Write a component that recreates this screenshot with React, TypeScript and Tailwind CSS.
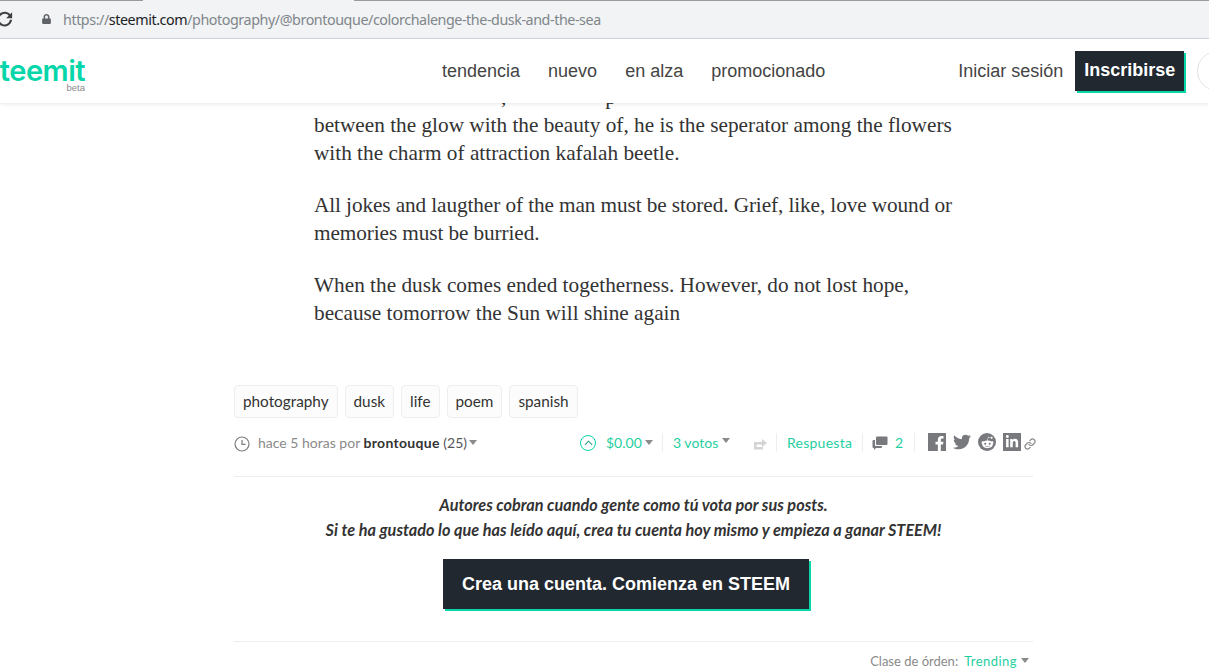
import React from "react";
import { FaFacebookF, FaTwitter, FaRedditAlien, FaLinkedinIn, FaLock } from "react-icons/fa";
import { Link as LinkIcon } from "lucide-react";

const Caret = ({ className = "" }: { className?: string }) => (
  <span className={`inline-block shrink-0 w-0 h-0 border-x-[4.5px] border-x-transparent border-t-[5px] border-t-[#8a8a8a] ${className}`} />
);
const Divider = ({ className = "" }: { className?: string }) => <span className={`w-px h-[19px] shrink-0 bg-[#eeeeee] ${className}`} />;

export default function App() {
  const sans = "font-['Lato','Noto_Sans',sans-serif]";
  return (
    <div className="w-[1209px] h-[670px] overflow-hidden bg-white flex flex-col font-['Liberation_Sans',sans-serif]">
      {/* browser chrome */}
      <div className="h-[39px] shrink-0 bg-[#f1f3f4] border-b border-[#d3d6e2] flex items-center relative">
        <div className="absolute top-0 left-0 w-[143px] h-px bg-[#9a9a9a]" />
        <div className="absolute top-0 left-[354px] right-0 h-px bg-[#9a9a9a]" />
        <svg viewBox="0 0 24 24" className="w-[18px] h-[18px] ml-[-4px] mt-[-1px] shrink-0 text-[#3c4043]" fill="none" stroke="currentColor" strokeWidth="2.8">
          <path d="M19 8a8.5 8.5 0 1 0 1 5" />
          <path d="M21.500 3v8h-8z" fill="currentColor" stroke="none" />
        </svg>
        <div className="ml-[10px] flex-1 h-[28px] flex items-center pl-[18px]">
          <FaLock className="w-[9px] h-[10px] text-[#5f6368]" />
          <span className="ml-[12px] mt-[1px] whitespace-nowrap text-[14.3px] text-[#80868b] font-['Noto_Sans',sans-serif] tracking-[-0.43px]">
            https://<span className="text-[#202124]">steemit.com</span>/photography/@brontouque/colorchalenge-the-dusk-and-the-sea
          </span>
        </div>
      </div>

      {/* header */}
      <div className="h-[64px] shrink-0 bg-white shadow-[0_1px_4px_rgba(0,0,0,0.1)] relative z-10 flex items-center whitespace-nowrap">
        <div className="w-[88px] shrink-0 flex flex-col items-end pr-[3px] mt-[6px]">
          <span className="text-[29px] leading-[28px] text-[#06d6a9] font-['Inter',sans-serif] font-semibold tracking-[-0.5px]">teemit</span>
          <span className="text-[9.500px] leading-[9px] text-[#8a8a8a] -mt-[2px]">beta</span>
        </div>
        <nav className="flex items-center gap-[28px] ml-[354px] text-[18px] text-[#444444]">
          <span>tendencia</span>
          <span>nuevo</span>
          <span>en alza</span>
          <span>promocionado</span>
        </nav>
        <span className="ml-[133px] text-[18px] text-[#444444]">Iniciar sesión</span>
        <span className="ml-[12px] w-[109px] h-[40px] shrink-0 flex items-center justify-center bg-[#22282f] text-white font-bold text-[18px] shadow-[2px_2px_0_#06d6a9] mt-[-1px]">Inscribirse</span>
        <span className="ml-[13px] w-[40px] h-[40px] shrink-0 rounded-full border border-[#e2e2e2] mt-[-1px]" />
      </div>

      {/* article */}
      <main className="flex-1 pl-[234px] w-[1060px]">
        <div className="pl-[80px] w-[730px] -mt-[20px] text-[21.280px] leading-[28px] text-[#333333] font-['Liberation_Serif',serif]">
          <div className="h-[28px] whitespace-nowrap">
            <span className="ml-[187px]">,</span>
            <span className="ml-[99px]">p</span>
          </div>
          <p className="w-[640px]">between the glow with the beauty of, he is the seperator among the flowers with the charm of attraction kafalah beetle.</p>
          <p className="mt-[24px] tracking-[-0.1px]">All jokes and laugther of the man must be stored. Grief, like, love wound or memories must be burried.</p>
          <p className="mt-[24px] w-[640px]">When the dusk comes ended togetherness. However, do not lost hope, because tomorrow the Sun will shine again</p>
        </div>

        <div className={`${sans} mt-[58px] flex gap-[7px] text-[15.300px] text-[#333333]`}>
          {["photography", "dusk", "life", "poem", "spanish"].map((t) => (
            <span key={t} className="h-[33px] px-[8px] flex items-center bg-[#fcfcfc] border border-[#eeeeee] rounded-[4px]">{t}</span>
          ))}
        </div>

        <div className={`${sans} mt-[7px] h-[34px] flex items-center text-[14px] text-[#8a8a8a] whitespace-nowrap`}>
          <div className="w-[346px] shrink-0 flex items-center">
            <svg viewBox="0 0 16 16" className="w-[16px] h-[16px] mt-[3px]" fill="none" stroke="#7d7d7d" strokeWidth="1.2">
              <circle cx="8" cy="8" r="7" />
              <path d="M8 4v4.300h3.500" />
            </svg>
            <span className="ml-[8px]">hace 5 horas por <b className="text-[#333333] tracking-[0.3px]">brontouque</b> <span className="text-[#555555]">(25)</span></span>
            <Caret className="ml-[2px]" />
          </div>

          <span className="w-[16px] h-[16px] shrink-0 mt-[2px] rounded-full border border-[#06d6a9] flex items-center justify-center">
            <svg viewBox="0 0 10 6" className="w-[9px] h-[6px]" fill="none" stroke="#2a9d82" strokeWidth="1.2"><path d="M1 5l4-4 4 4" /></svg>
          </span>
          <span className="ml-[10px] w-[34px] shrink-0 text-[#1fcf9f]">$0.00</span>
          <Caret className="ml-[5px]" />
          <Divider className="ml-[9px]" />
          <span className="ml-[10px] w-[45px] shrink-0 text-[#1fcf9f]">3 votos</span>
          <Caret className="ml-[4px] mb-[3px]" />
          <svg viewBox="0 0 14 12" className="w-[14px] h-[12px] ml-[24px] mt-[3px] shrink-0" fill="#d4d4d4">
            <path d="M0 4h8V1l5 4-5 4V6.500H2.500V9H9v2.500H0z" />
          </svg>
          <Divider className="ml-[8px]" />
          <span className="ml-[10px] w-[65px] shrink-0 text-center text-[#1fcf9f] tracking-[0.25px]">Respuesta</span>
          <Divider className="ml-[10px]" />
          <svg viewBox="0 0 16 14" className="w-[16px] h-[14px] ml-[9px] mt-[2px] shrink-0" fill="#77797d">
            <path d="M4 1.500a1 1 0 0 1 1-1h9.500a1 1 0 0 1 1 1V8a1 1 0 0 1-1 1H5a1 1 0 0 1-1-1z" />
            <path d="M0.500 5a1 1 0 0 1 1-1H3v5c0 .8.500 1 1 1h6v1a1 1 0 0 1-1 1H4l-2 2v-2H1.500a1 1 0 0 1-1-1z" />
          </svg>
          <span className="ml-[7px] w-[8px] shrink-0 text-[#1fcf9f]">2</span>
          <Divider className="ml-[11px]" />
          <span className="ml-[13px] w-[18px] h-[18px] shrink-0 bg-[#77797d] flex items-end justify-end overflow-hidden">
            <FaFacebookF className="w-[15px] h-[15px] text-white translate-x-[1px]" />
          </span>
          <FaTwitter className="ml-[7px] w-[18px] h-[18px] shrink-0 text-[#77797d]" />
          <span className="ml-[7px] w-[18px] h-[18px] shrink-0 rounded-full bg-[#77797d] flex items-center justify-center">
            <FaRedditAlien className="w-[13px] h-[13px] text-white" />
          </span>
          <span className="ml-[7px] w-[18px] h-[18px] shrink-0 bg-[#77797d] flex items-center justify-center">
            <FaLinkedinIn className="w-[14px] h-[14px] text-white" />
          </span>
          <LinkIcon className="ml-[3px] w-[12px] h-[14px] mt-[3px] shrink-0 text-[#8a8a8a]" strokeWidth={2.4} />
        </div>

        <div className="w-[799px] h-px bg-[#eeeeee] mt-[17px]" />

        <div className={`${sans} w-[799px] mt-[15px] text-center text-[16.250px] leading-[25px] italic font-bold text-[#333333]`}>
          <p>Autores cobran cuando gente como tú vota por sus posts.</p>
          <p>Si te ha gustado lo que has leído aquí, crea tu cuenta hoy mismo y empieza a ganar STEEM!</p>
        </div>

        <div className="w-[799px] mt-[17px] flex justify-center pr-[15px]">
          <span className="w-[366px] h-[50px] flex items-center justify-center bg-[#22282f] text-white font-bold text-[18px] shadow-[2px_2px_0_#06d6a9]">Crea una cuenta. Comienza en STEEM</span>
        </div>

        <div className="w-[799px] h-px bg-[#eeeeee] mt-[32px]" />

        <div className={`${sans} w-[799px] mt-[10px] flex items-center justify-end text-[13px] text-[#8a8a8a] pr-[4px] whitespace-nowrap`}>
          <span>Clase de órden:</span>
          <span className="ml-[6px] text-[#1fcf9f] tracking-[0.45px]">Trending</span>
          <Caret className="ml-[4px] mb-[3px]" />
        </div>
      </main>
    </div>
  );
}
